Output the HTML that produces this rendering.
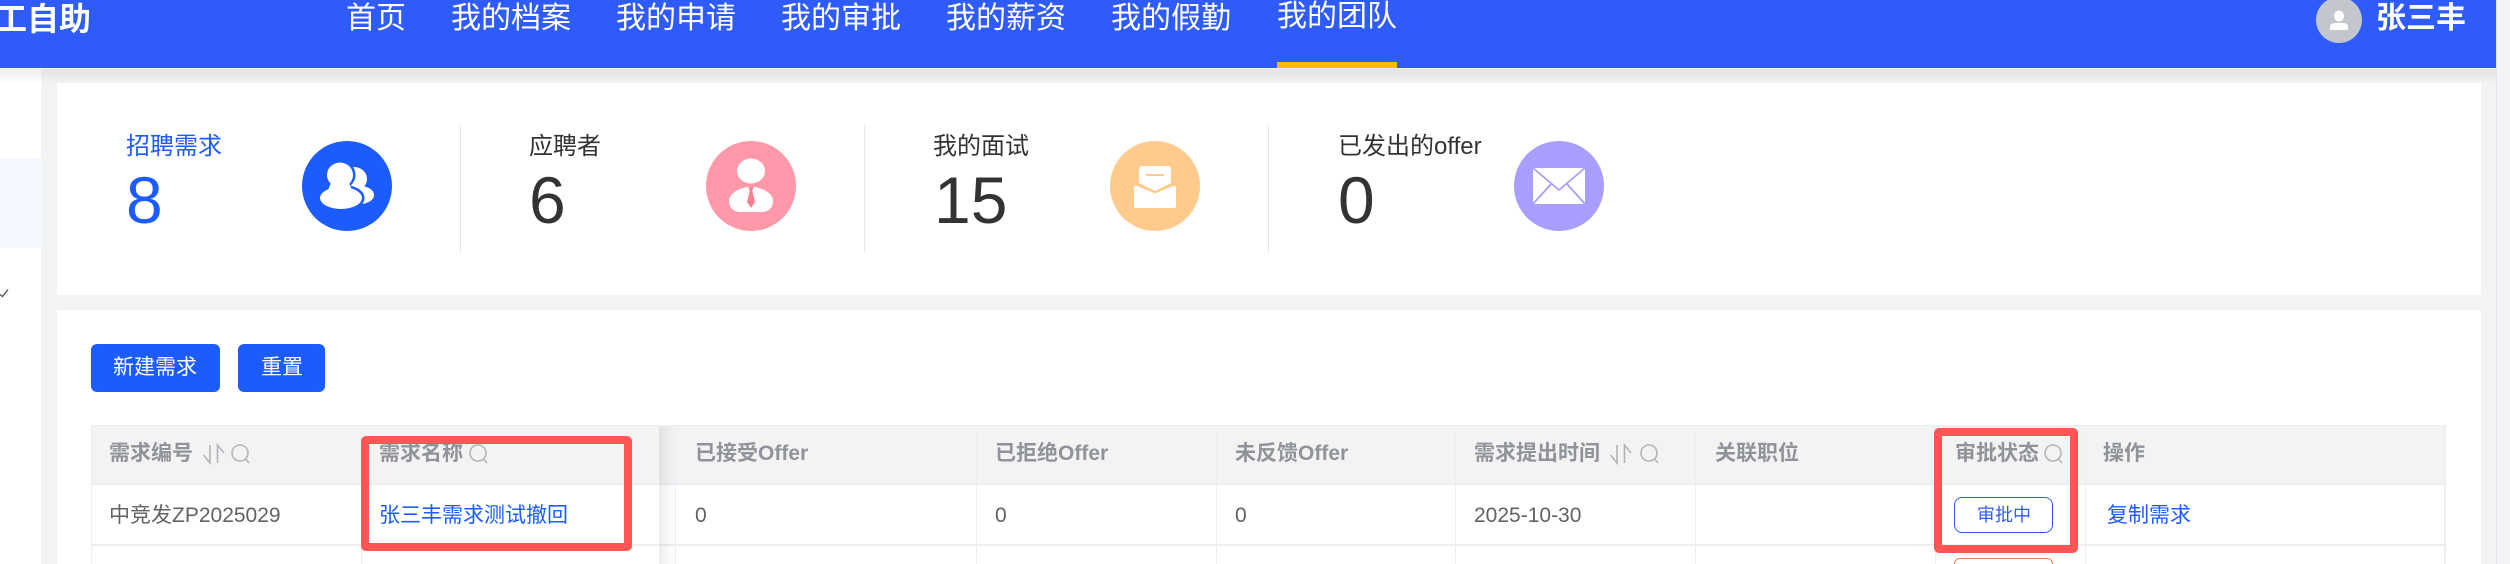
<!DOCTYPE html>
<html lang="zh">
<head>
<meta charset="utf-8">
<title>员工自助</title>
<style>
html,body{margin:0;padding:0;width:2510px;height:564px;overflow:hidden;background:#f2f3f5;font-family:"Liberation Sans","Noto Sans CJK SC",sans-serif}
div,span,svg{position:absolute;display:block}
#root{left:0;top:0;width:2510px;height:564px;overflow:hidden;background:#f2f3f5}
.t{white-space:nowrap;line-height:40px;height:40px}
.nav{color:#fff;font-size:30px;top:-1px}
.lab{font-size:24px;top:127px;color:#333}
.num{font-size:66px;line-height:80px;height:80px;top:160px;color:#333}
.dv{width:1px;top:125px;height:128px;background:#e8e8e8}
.th{font-size:21px;font-weight:bold;color:#909399;top:434px}
.td{font-size:21px;color:#606266;top:496px}
.lnk{color:#1c5cff}
.v{width:1px;top:427px;height:137px;background:#eceef3}
.ic{stroke:#b3b5ba;fill:none;stroke-width:1.6}
.red{border:8px solid #ff5555;border-radius:5px;box-sizing:border-box}
</style>
</head>
<body>
<div id="root">
<!-- sidebar -->
<div style="left:0;top:68px;width:41px;height:496px;background:#fff"></div>
<div style="left:0;top:158px;width:41px;height:90px;background:#f3f8ff"></div>
<svg style="left:0;top:286px" width="10" height="14"><path d="M0 8.500L2.500 10.500L8 3.500" stroke="#555" stroke-width="1.400" fill="none"/></svg>

<!-- header shadow -->
<div style="left:0;top:68px;width:2496px;height:16px;background:linear-gradient(to bottom,rgba(0,0,0,.07),rgba(0,0,0,0))"></div>
<div style="left:2496px;top:0;width:1px;height:564px;background:#e2e3e6"></div>

<!-- header -->
<div style="left:0;top:0;width:2496px;height:68px;background:#2f5bfb"></div>
<div style="left:0;top:68px;width:2496px;height:1px;background:#f4f5f8"></div>
<div class="t" style="left:-5px;top:-1px;color:#fff;font-size:32px;font-weight:bold">工自助</div>
<div class="t nav" style="left:346px">首页</div>
<div class="t nav" style="left:451px">我的档案</div>
<div class="t nav" style="left:616px">我的申请</div>
<div class="t nav" style="left:781px">我的审批</div>
<div class="t nav" style="left:946px">我的薪资</div>
<div class="t nav" style="left:1111px">我的假勤</div>
<div class="t nav" style="left:1277px;top:-3px">我的团队</div>
<div style="left:1277px;top:62px;width:120px;height:6px;background:#fdb900"></div>
<svg style="left:2316px;top:0" width="46" height="43" viewBox="0 3 46 43">
<circle cx="23" cy="23" r="23" fill="#c3c6cd"/>
<ellipse cx="23" cy="19" rx="5" ry="5.500" fill="#fff"/>
<path d="M14 33v-3q0-4 5-4h8q5 0 5 4v3z" fill="#fff"/>
</svg>
<div class="t" style="left:2376px;top:-1px;color:#fff;font-size:30px;font-weight:bold">张三丰</div>

<!-- stats card -->
<div style="left:57px;top:83px;width:2424px;height:212px;background:#fff"></div>

<div class="t lab" style="left:126px;color:#1c5cff">招聘需求</div>
<div class="t num" style="left:126px;color:#1c5cff">8</div>
<svg style="left:302px;top:141px" width="90" height="90" viewBox="0 0 90 90">
<circle cx="45" cy="45" r="45" fill="#1c5cff"/>
<ellipse cx="52" cy="38" rx="13" ry="12" fill="#fff"/>
<ellipse cx="58" cy="54" rx="14" ry="9" fill="#fff"/>
<path d="M53 30h8v20h-8z" fill="#fff"/>
<g fill="#1c5cff" stroke="#1c5cff" stroke-width="5">
<ellipse cx="38" cy="34" rx="13" ry="12"/>
<ellipse cx="39" cy="57" rx="21" ry="11"/>
</g>
<ellipse cx="38" cy="34" rx="13" ry="12.500" fill="#fff"/>
<ellipse cx="39" cy="57" rx="21" ry="11" fill="#fff"/>
<path d="M29 42h18l3 7H26z" fill="#fff"/>
</svg>
<div class="dv" style="left:460px"></div>

<div class="t lab" style="left:529px">应聘者</div>
<div class="t num" style="left:529px">6</div>
<svg style="left:706px;top:141px" width="90" height="90" viewBox="0 0 90 90">
<circle cx="45" cy="45" r="45" fill="#ff98a8"/>
<ellipse cx="45" cy="30" rx="14" ry="12.500" fill="#fff"/>
<path d="M23 60c0-7 8-12 18-14h8c10 2 18 7 18 14 0 7-5 11-11 11H34c-6 0-11-4-11-11z" fill="#fff"/>
<path d="M42.500 46h5l-1.200 4 2.700 11-4 6-4-6 2.700-11z" fill="#ff7e92"/>
</svg>
<div class="dv" style="left:864px"></div>

<div class="t lab" style="left:933px">我的面试</div>
<div class="t num" style="left:934px">15</div>
<svg style="left:1110px;top:141px" width="90" height="90" viewBox="0 0 90 90">
<circle cx="45" cy="45" r="45" fill="#ffcb8c"/>
<path d="M32 25h26a3 3 0 0 1 3 3v14l-16 8-16-8V28a3 3 0 0 1 3-3z" fill="#fff"/>
<path d="M36 34h18" stroke="#ffcb8c" stroke-width="2"/>
<path d="M24 47a2 2 0 0 1 3-2l18 7.500 18-7.500a2 2 0 0 1 3 2v18a2 2 0 0 1-2 2H26a2 2 0 0 1-2-2z" fill="#fff"/>
</svg>
<div class="dv" style="left:1268px"></div>

<div class="t lab" style="left:1338px">已发出的offer</div>
<div class="t num" style="left:1338px">0</div>
<svg style="left:1514px;top:141px" width="90" height="90" viewBox="0 0 90 90">
<circle cx="45" cy="45" r="45" fill="#a99efe"/>
<rect x="19" y="27" width="52" height="36" fill="#fff"/>
<path d="M19 27L45 49L71 27M19 63L37 43M71 63L53 43" stroke="#a99efe" stroke-width="1.800" fill="none"/>
</svg>

<!-- table card -->
<div style="left:57px;top:310px;width:2424px;height:254px;background:#fff"></div>
<div style="left:91px;top:344px;width:129px;height:48px;background:#1c5cff;border-radius:6px"></div>
<div class="t" style="left:113px;top:348px;color:#fff;font-size:21px">新建需求</div>
<div style="left:238px;top:344px;width:87px;height:48px;background:#1c5cff;border-radius:6px"></div>
<div class="t" style="left:261px;top:348px;color:#fff;font-size:21px">重置</div>

<!-- table -->
<div style="left:91px;top:425px;width:2355px;height:59px;background:#f3f3f4"></div>
<div style="left:91px;top:425px;width:2355px;height:2px;background:#edeff3"></div>
<div style="left:91px;top:483px;width:2355px;height:2px;background:#eceef3"></div>
<div style="left:91px;top:544px;width:2355px;height:2px;background:#eceef3"></div>
<div style="left:91px;top:427px;width:1px;height:137px;background:#eceef3"></div>
<div style="left:2444px;top:427px;width:2px;height:137px;background:#edeff3"></div>
<div class="v" style="left:361px"></div>
<div class="v" style="left:675px"></div>
<div class="v" style="left:976px"></div>
<div class="v" style="left:1216px"></div>
<div class="v" style="left:1455px"></div>
<div class="v" style="left:1695px"></div>
<div class="v" style="left:1935px"></div>
<div class="v" style="left:2085px"></div>
<div style="left:659px;top:427px;width:16px;height:137px;background:linear-gradient(to right,rgba(0,0,0,.07),rgba(0,0,0,0))"></div>

<div class="t th" style="left:109px">需求编号</div>
<svg style="left:200px;top:440px" width="54" height="28" viewBox="0 0 54 28">
<g class="ic"><path d="M10 5v18L3.500 15"/><path d="M17.500 23V5L24 13"/><circle cx="40" cy="13" r="8"/><path d="M45.500 19L49 23"/></g>
</svg>
<div class="t th" style="left:379px">需求名称</div>
<svg style="left:466px;top:440px" width="24" height="28" viewBox="0 0 24 28">
<g class="ic"><circle cx="12" cy="13" r="8"/><path d="M17.500 19L21 23"/></g>
</svg>
<div class="t th" style="left:695px">已接受Offer</div>
<div class="t th" style="left:995px">已拒绝Offer</div>
<div class="t th" style="left:1235px">未反馈Offer</div>
<div class="t th" style="left:1474px">需求提出时间</div>
<svg style="left:1607px;top:440px" width="54" height="28" viewBox="0 0 54 28">
<g class="ic"><path d="M10 5v18L3.500 15"/><path d="M17.500 23V5L24 13"/><circle cx="42" cy="13" r="8"/><path d="M47.500 19L51 23"/></g>
</svg>
<div class="t th" style="left:1715px">关联职位</div>
<div class="t th" style="left:1955px">审批状态</div>
<svg style="left:2041px;top:440px" width="24" height="28" viewBox="0 0 24 28">
<g class="ic"><circle cx="12" cy="13" r="8"/><path d="M17.500 19L21 23"/></g>
</svg>
<div class="t th" style="left:2103px">操作</div>

<div class="t td" style="left:109px">中竞发ZP2025029</div>
<div class="t td lnk" style="left:379px">张三丰需求测试撤回</div>
<div class="t td" style="left:695px">0</div>
<div class="t td" style="left:995px">0</div>
<div class="t td" style="left:1235px">0</div>
<div class="t td" style="left:1474px">2025-10-30</div>
<div style="left:1954px;top:497px;width:99px;height:36px;box-sizing:border-box;border:1.500px solid #2f5bfb;border-radius:8px"></div>
<div class="t" style="left:1977px;top:495px;font-size:18px;color:#2f5bfb">审批中</div>
<div class="t td lnk" style="left:2107px">复制需求</div>
<div style="left:1954px;top:558px;width:99px;height:6px;box-sizing:border-box;border:1.500px solid #e8825a;border-bottom:0;border-radius:8px 8px 0 0"></div>

<!-- annotations -->
<div class="red" style="left:361px;top:436px;width:271px;height:115px"></div>
<div class="red" style="left:1934px;top:428px;width:144px;height:125px"></div>
</div>
</body>
</html>
